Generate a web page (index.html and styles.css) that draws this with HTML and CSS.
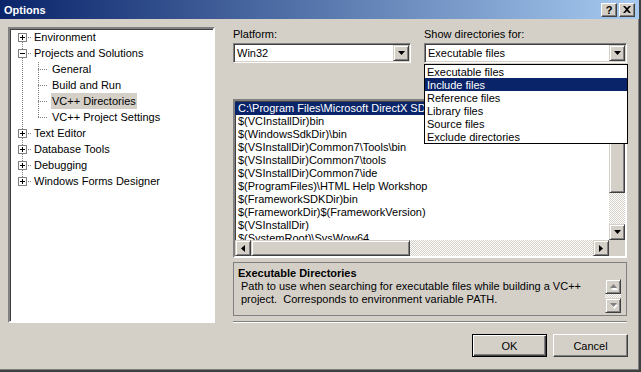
FILE: index.html
```html
<!DOCTYPE html>
<html lang="en">
<head>
    <meta charset="UTF-8">
    <title>Options</title>
    <link rel="stylesheet" href="styles.css">
</head>
<body>
<div class="window">
    <div class="titlebar">
        <span class="title">Options</span>
        <div class="caption-btns">
            <span class="cap-btn">?</span>
            <span class="cap-btn">
                <svg width="8" height="7" viewBox="0 0 8 7"><path d="M0 0h2l2 2 2-2h2L5 3.5 8 7H6L4 5 2 7H0l3-3.5z"/></svg>
            </span>
        </div>
    </div>

    <div class="content">
        <div class="tree">
            <div class="tree-row"><span class="node first"><i class="box plus"></i></span><span class="label">Environment</span></div>
            <div class="tree-row"><span class="node mid"><i class="box minus"></i></span><span class="label">Projects and Solutions</span></div>
            <div class="tree-row"><span class="pass"></span><span class="node child mid"></span><span class="label">General</span></div>
            <div class="tree-row"><span class="pass"></span><span class="node child mid"></span><span class="label">Build and Run</span></div>
            <div class="tree-row"><span class="pass"></span><span class="node child mid"></span><span class="label selected">VC++ Directories</span></div>
            <div class="tree-row"><span class="pass"></span><span class="node child last"></span><span class="label">VC++ Project Settings</span></div>
            <div class="tree-row"><span class="node mid"><i class="box plus"></i></span><span class="label">Text Editor</span></div>
            <div class="tree-row"><span class="node mid"><i class="box plus"></i></span><span class="label">Database Tools</span></div>
            <div class="tree-row"><span class="node mid"><i class="box plus"></i></span><span class="label">Debugging</span></div>
            <div class="tree-row"><span class="node last"><i class="box plus"></i></span><span class="label">Windows Forms Designer</span></div>
        </div>

        <div class="panel">
            <div class="fields">
                <div class="field platform">
                    <div class="field-label">Platform:</div>
                    <div class="combo">
                        <span class="combo-text">Win32</span>
                        <span class="raised combo-btn"><svg width="7" height="4" viewBox="0 0 7 4"><path d="M0 0h7L3.5 4z"/></svg></span>
                    </div>
                </div>
                <div class="field dirs">
                    <div class="field-label">Show directories for:</div>
                    <div class="combo">
                        <span class="combo-text">Executable files</span>
                        <span class="raised combo-btn"><svg width="7" height="4" viewBox="0 0 7 4"><path d="M0 0h7L3.5 4z"/></svg></span>
                        <div class="dropdown">
                            <div class="drop-item">Executable files</div>
                            <div class="drop-item active">Include files</div>
                            <div class="drop-item">Reference files</div>
                            <div class="drop-item">Library files</div>
                            <div class="drop-item">Source files</div>
                            <div class="drop-item">Exclude directories</div>
                        </div>
                    </div>
                </div>
            </div>

            <div class="toolbar"></div>

            <div class="listbox">
                <div class="list-main">
                    <div class="list-rows">
                        <div class="list-item active">C:\Program Files\Microsoft DirectX SDK (August 2007)\Utilities\Bin\x86</div>
                        <div class="list-item">$(VCInstallDir)bin</div>
                        <div class="list-item">$(WindowsSdkDir)\bin</div>
                        <div class="list-item">$(VSInstallDir)Common7\Tools\bin</div>
                        <div class="list-item">$(VSInstallDir)Common7\tools</div>
                        <div class="list-item">$(VSInstallDir)Common7\ide</div>
                        <div class="list-item">$(ProgramFiles)\HTML Help Workshop</div>
                        <div class="list-item">$(FrameworkSDKDir)bin</div>
                        <div class="list-item">$(FrameworkDir)$(FrameworkVersion)</div>
                        <div class="list-item">$(VSInstallDir)</div>
                        <div class="list-item">$(SystemRoot)\SysWow64</div>
                    </div>
                    <div class="vscroll checker">
                        <span class="raised sb-btn"><svg width="7" height="4" viewBox="0 0 7 4"><path d="M3.5 0L7 4H0z"/></svg></span>
                        <span class="raised vthumb"></span>
                        <span class="track"></span>
                        <span class="raised sb-btn"><svg width="7" height="4" viewBox="0 0 7 4"><path d="M0 0h7L3.5 4z"/></svg></span>
                    </div>
                </div>
                <div class="hscroll-row">
                    <div class="hscroll checker">
                        <span class="raised sb-btn"><svg width="4" height="7" viewBox="0 0 4 7"><path d="M4 0v7L0 3.5z"/></svg></span>
                        <span class="raised hthumb"></span>
                        <span class="track"></span>
                        <span class="raised sb-btn"><svg width="4" height="7" viewBox="0 0 4 7"><path d="M0 0v7l4-3.5z"/></svg></span>
                    </div>
                    <div class="corner"></div>
                </div>
            </div>

            <div class="desc">
                <div class="desc-text">
                    <div class="desc-title">Executable Directories</div>
                    <div class="desc-body">Path to use when searching for executable files while building a VC++<br>project.&nbsp; Corresponds to environment variable PATH.</div>
                </div>
                <div class="desc-scroll">
                    <span class="raised small-btn"><svg width="9" height="6" viewBox="0 0 9 6"><path d="M4.5 1L8 5H1z" fill="#fff" transform="translate(1 1)"/><path d="M4.5 0L8 4H1z" fill="#808080"/></svg></span>
                    <span class="gap checker"></span>
                    <span class="raised small-btn"><svg width="9" height="6" viewBox="0 0 9 6"><path d="M1 1h7L4.5 5z" fill="#fff" transform="translate(1 1)"/><path d="M1 0h7L4.5 4z" fill="#808080"/></svg></span>
                </div>
            </div>

            <div class="separator"></div>
        </div>
    </div>

    <div class="buttons">
        <button class="btn default">OK</button>
        <button class="btn">Cancel</button>
    </div>
</div>
</body>
</html>
```

FILE: styles.css
```css
* {
    margin: 0;
    padding: 0;
    box-sizing: border-box;
}

body {
    font-family: "Liberation Sans", Arial, sans-serif;
    font-size: 11px;
    color: #000;
    background-color: #d4d0c8;
}

.window {
    width: 641px;
    height: 372px;
    display: flex;
    flex-direction: column;
    background-color: #d4d0c8;
    border-right: 2px solid #404040;
    border-bottom: 2px solid #404040;
    box-shadow: inset -1px -1px #808080;
}

/* title bar */
.titlebar {
    height: 19px;
    display: flex;
    align-items: center;
    justify-content: space-between;
    padding: 0 4px 0 4px;
    background: linear-gradient(to right, #0a246a, #a6caf0);
}

.title {
    color: #fff;
    font-weight: bold;
}

.caption-btns {
    display: flex;
    gap: 2px;
}

.cap-btn {
    width: 16px;
    height: 14px;
    display: flex;
    align-items: center;
    justify-content: center;
    background-color: #d4d0c8;
    border: 1px solid;
    border-color: #fff #404040 #404040 #fff;
    box-shadow: inset -1px -1px #808080;
    font-weight: bold;
    font-size: 11px;
}

.raised {
    background-color: #d4d0c8;
    border: 1px solid;
    border-color: #d4d0c8 #404040 #404040 #d4d0c8;
    box-shadow: inset 1px 1px #fff, inset -1px -1px #808080;
}

.checker {
    background: repeating-conic-gradient(#fff 0 25%, #d4d0c8 0 50%) 0 0 / 2px 2px;
}

.content {
    display: flex;
    gap: 18px;
    padding: 8px 0 0 8px;
}

/* tree */
.tree {
    width: 207px;
    height: 296px;
    background-color: #fff;
    border: 2px solid;
    border-color: #808080 #fff #fff #808080;
    box-shadow: inset 1px 1px #404040;
    padding-left: 4px;
}

.tree-row {
    display: flex;
    height: 16px;
    line-height: 16px;
}

.node,
.pass {
    --dots-v: repeating-linear-gradient(#808080 0 1px, transparent 1px 2px);
    --dots-h: repeating-linear-gradient(to right, #808080 0 1px, transparent 1px 2px);
    flex-shrink: 0;
    display: flex;
    align-items: flex-start;
    padding: 4px 0 0 4px;
    background-repeat: no-repeat;
}

.node {
    width: 19px;
}

.node.child {
    width: 21px;
}

.pass {
    width: 16px;
    background-image: var(--dots-v);
    background-position: 8px 1px;
    background-size: 1px 16px;
}

.node.first {
    background-image: var(--dots-v), var(--dots-h);
    background-position: 8px 9px, 8px 8px;
    background-size: 1px 7px, 10px 1px;
}

.node.mid {
    background-image: var(--dots-v), var(--dots-h);
    background-position: 8px 1px, 8px 8px;
    background-size: 1px 16px, 10px 1px;
}

.node.last {
    background-image: var(--dots-v), var(--dots-h);
    background-position: 8px 1px, 8px 8px;
    background-size: 1px 8px, 10px 1px;
}

.box {
    width: 9px;
    height: 9px;
    border: 1px solid #808080;
    background-color: #fff;
    background-repeat: no-repeat;
    background-position: center;
}

.box.plus {
    background-image: linear-gradient(#000, #000), linear-gradient(#000, #000);
    background-size: 5px 1px, 1px 5px;
}

.box.minus {
    background-image: linear-gradient(#000, #000);
    background-size: 5px 1px;
}

.label {
    padding: 0 1px;
    height: 16px;
    white-space: nowrap;
}

.label.selected {
    background-color: #d4d0c8;
}

/* right panel */
.panel {
    width: 394px;
    display: flex;
    flex-direction: column;
}

.fields {
    display: flex;
    gap: 13px;
}

.platform {
    width: 178px;
}

.dirs {
    width: 203px;
}

.field-label {
    height: 13px;
    line-height: 13px;
    margin: 1px 0 2px;
}

.combo {
    position: relative;
    height: 20px;
    display: flex;
    align-items: center;
    justify-content: space-between;
    background-color: #fff;
    border: 1px solid;
    border-color: #808080 #fff #fff #808080;
    box-shadow: inset 1px 1px #404040, inset -1px -1px #d4d0c8;
    padding: 1px;
}

.combo-text {
    padding-left: 2px;
}

.combo-btn {
    width: 16px;
    height: 16px;
    display: flex;
    align-items: center;
    justify-content: center;
}

.dropdown {
    position: absolute;
    top: 20px;
    left: -1px;
    width: 204px;
    background-color: #fff;
    border: 1px solid #000;
    z-index: 10;
}

.drop-item {
    height: 13px;
    line-height: 13px;
    padding: 1px 0 0 2px;
}

.drop-item.active,
.list-item.active {
    background-color: #0a246a;
    color: #fff;
}

.toolbar {
    height: 36px;
}

/* directory list */
.listbox {
    height: 159px;
    border: 2px solid;
    border-color: #808080 #fff #fff #808080;
    box-shadow: inset 1px 1px #404040, inset -1px -1px #d4d0c8;
    background-color: #fff;
    display: flex;
    flex-direction: column;
}

.list-main {
    display: flex;
    height: 139px;
}

.list-rows {
    flex: 1;
    overflow: hidden;
    padding-top: 1px;
}

.list-item {
    height: 13px;
    line-height: 13px;
    padding-left: 3px;
    white-space: nowrap;
}

.vscroll {
    width: 16px;
    display: flex;
    flex-direction: column;
}

.hscroll-row {
    display: flex;
    height: 16px;
}

.hscroll {
    flex: 1;
    display: flex;
}

.sb-btn {
    width: 16px;
    height: 16px;
    flex-shrink: 0;
    display: flex;
    align-items: center;
    justify-content: center;
}

.vthumb {
    height: 76px;
}

.hthumb {
    width: 159px;
}

.track {
    flex: 1;
}

.corner {
    width: 16px;
    background-color: #d4d0c8;
}

/* description */
.desc {
    margin-top: 4px;
    height: 54px;
    border: 1px solid #808080;
    display: flex;
}

.desc-text {
    flex: 1;
    padding: 4px 0 0 4px;
    line-height: 13px;
}

.desc-title {
    font-weight: bold;
}

.desc-body {
    padding-left: 3px;
}

.desc-scroll {
    width: 16px;
    margin-right: 5px;
    padding-top: 16px;
    display: flex;
    flex-direction: column;
}

.small-btn {
    height: 15px;
    display: flex;
    align-items: center;
    justify-content: center;
}

.gap {
    height: 4px;
}

.separator {
    margin-top: 5px;
    height: 2px;
    border-top: 1px solid #808080;
    border-bottom: 1px solid #fff;
}

/* dialog buttons */
.buttons {
    display: flex;
    justify-content: flex-end;
    gap: 6px;
    margin-top: 11px;
    padding-right: 11px;
}

.btn {
    width: 75px;
    height: 23px;
    font-family: inherit;
    font-size: 11px;
    color: #000;
    background-color: #d4d0c8;
    border: 1px solid;
    border-color: #fff #404040 #404040 #fff;
    box-shadow: inset -1px -1px #808080;
}

.btn.default {
    border-color: #000;
    box-shadow: inset 1px 1px #fff, inset -1px -1px #404040, inset -2px -2px #808080;
}
```
